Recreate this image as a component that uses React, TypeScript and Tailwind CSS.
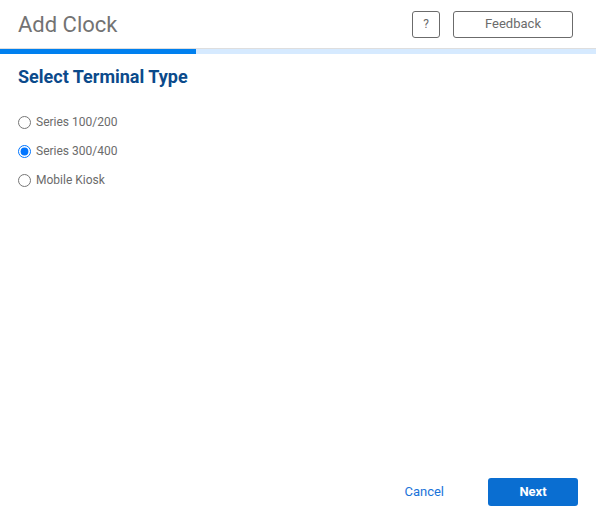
import { useState } from 'react';

const options = ['Series 100/200', 'Series 300/400', 'Mobile Kiosk'];

const App = () => {
  const [selected, setSelected] = useState('Series 300/400');

  return (
    <div
      className="h-[529px] w-[596px] bg-white flex flex-col"
      style={{ fontFamily: 'Roboto, "Liberation Sans", sans-serif' }}
    >
      {/* Header */}
      <div className="h-[49px] flex items-center justify-between pl-[18px] pr-[23px] border-b border-[#dedede]">
        <h1 className="text-[22px] text-[#737373] font-normal">Add Clock</h1>
        <div className="flex items-center gap-[13px]">
          <button className="w-[28px] h-[27px] border border-[#6b6b6b] rounded-[3px] text-[12px] text-[#6b6b6b] flex items-center justify-center">
            ?
          </button>
          <button className="w-[120px] h-[27px] border border-[#6b6b6b] rounded-[3px] text-[13px] text-[#6b6b6b] flex items-center justify-center">
            Feedback
          </button>
        </div>
      </div>

      {/* Progress */}
      <div className="h-[5px] bg-[#d6eaff] flex">
        <div className="w-[196px] bg-[#0080ef]" />
      </div>

      {/* Content */}
      <div className="flex-1 px-[18px]">
        <h2 className="mt-[11px] text-[18px] font-bold text-[#0b4a8b] leading-[24px]">
          Select Terminal Type
        </h2>
        <div className="mt-[23px] flex flex-col gap-[9px]">
          {options.map((opt) => (
            <label key={opt} className="flex items-center h-[20px] cursor-pointer">
              <input
                type="radio"
                name="terminal"
                checked={selected === opt}
                onChange={() => setSelected(opt)}
                className="w-[13px] h-[13px] m-0 accent-[#0075ff]"
              />
              <span className="ml-[5px] text-[12px] text-[#6b6b6b]">{opt}</span>
            </label>
          ))}
        </div>
      </div>

      {/* Footer */}
      <div className="flex items-center justify-end pr-[18px] pb-[23px] gap-[44px]">
        <button className="text-[13px] text-[#1a73d9]">Cancel</button>
        <button className="w-[90px] h-[28px] rounded-[3px] bg-[#0a6ed1] text-white text-[13px] font-bold">
          Next
        </button>
      </div>
    </div>
  );
};

export default App;
